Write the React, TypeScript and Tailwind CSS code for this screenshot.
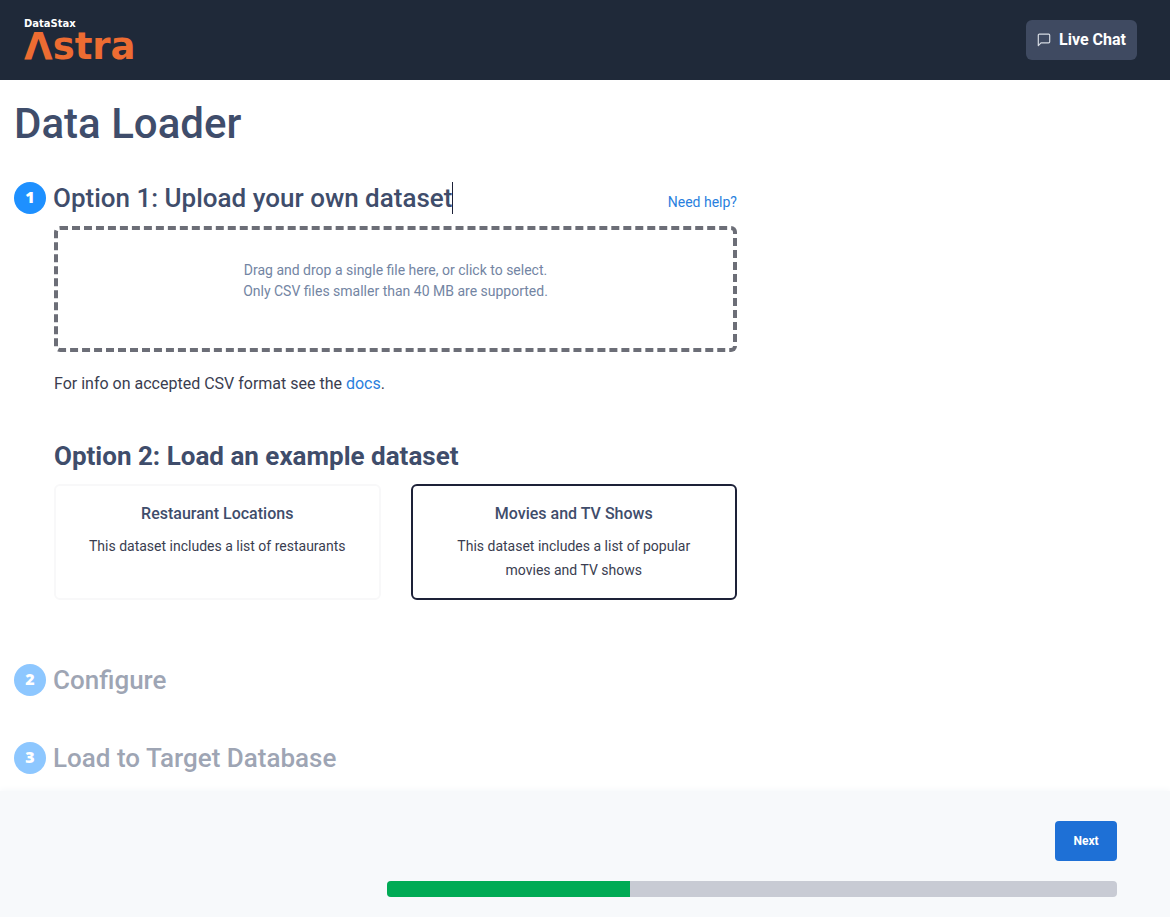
import { useState } from "react";

const datasets = [
    { id: "restaurants", title: "Restaurant Locations", description: "This dataset includes a list of restaurants" },
    { id: "movies", title: "Movies and TV Shows", description: "This dataset includes a list of popular movies and TV shows" },
];

function StepBadge({ step }: { step: number }) {
    return (
        <span className="flex size-8 shrink-0 items-center justify-center rounded-full bg-[#1e90ff] pb-0.5 font-['Open_Sans',sans-serif] text-base font-extrabold text-white">
            {step}
        </span>
    );
}

function PendingStep({ step, title }: { step: number; title: string }) {
    return (
        <section className="flex items-center gap-[7px] opacity-50">
            <StepBadge step={step} />
            <h2 className="text-[26px] leading-8 font-medium text-[#3f4d6b]">{title}</h2>
        </section>
    );
}

export default function App() {
    const [selected, setSelected] = useState("movies");
    const progress = 33.3;

    return (
        <div className="flex min-h-screen flex-col bg-white font-[Roboto,sans-serif] text-[#3a3d50]">
            <header className="flex h-20 items-center justify-between bg-[#1f2939] pr-[33px] pl-6">
                <a href="#" className="flex flex-col pt-0.5 font-['DejaVu_Sans',sans-serif] font-bold" aria-label="DataStax Astra">
                    <span className="text-[10px] leading-3 text-white">DataStax</span>
                    <span className="text-[37px] leading-[34px] text-[#ed6c32]">Λstra</span>
                </a>
                <button type="button" className="flex h-10 items-center gap-2 rounded-md bg-[#3f4a61] px-[11px] font-bold text-white">
                    <svg className="size-3.5" viewBox="0 0 14 14" fill="none" stroke="#d5dae2" strokeWidth="1.2" strokeLinejoin="round" aria-hidden="true">
                        <path d="M2.3 1.2h9.4c.6 0 1 .4 1 1v6.6c0 .6-.4 1-1 1H4l-2.7 2.8V2.2c0-.6.4-1 1-1z" />
                    </svg>
                    Live Chat
                </button>
            </header>

            <main className="w-full grow px-3.5 pt-5 pb-3">
                <div className="max-w-[723px]">
                    <h1 className="text-[42px] leading-12 font-medium text-[#3f4d6b]">Data Loader</h1>

                    {/* Step 1 */}
                    <section className="mt-[34px]">
                        <div className="flex items-center gap-[7px]">
                            <StepBadge step={1} />
                            <h2 className="border-r border-[#1d2138] text-[26px] leading-8 font-medium text-[#3f4d6b]">
                                Option 1: Upload your own dataset
                            </h2>
                            <a href="#" className="ml-auto pt-2 text-sm text-[#2a7fde]">Need help?</a>
                        </div>

                        <div className="pl-10">
                            <label className="relative mt-3 block h-[126px] cursor-pointer rounded-md border-4 border-dashed border-[#6c6e77] pt-[30px] text-center text-sm leading-[21px] text-[#7385a3]">
                                Drag and drop a single file here, or click to select.
                                <br />
                                Only CSV files smaller than 40 MB are supported.
                                <input type="file" accept=".csv" className="sr-only" />
                            </label>
                            <p className="mt-5 leading-6">
                                For info on accepted CSV format see the <a href="#" className="text-[#2a7fde]">docs</a>.
                            </p>

                            <h2 className="mt-11 text-[26px] leading-8 font-bold text-[#3f4d6b]">Option 2: Load an example dataset</h2>
                            <div className="mt-3 grid grid-cols-2 gap-[30px]">
                                {datasets.map((dataset) => (
                                    <button
                                        key={dataset.id}
                                        type="button"
                                        aria-pressed={selected === dataset.id}
                                        onClick={() => setSelected(dataset.id)}
                                        className={`flex h-[116px] flex-col items-center rounded-md border-2 px-8 pt-4 ${
                                            selected === dataset.id ? "border-[#1d2138]" : "border-[#f8f8f9]"
                                        }`}
                                    >
                                        <span className="leading-6 font-medium text-[#3f4d6b]">{dataset.title}</span>
                                        <span className="mt-2 text-sm leading-6">{dataset.description}</span>
                                    </button>
                                ))}
                            </div>
                        </div>
                    </section>

                    {/* Steps 2 and 3 */}
                    <div className="mt-16 flex flex-col gap-[46px]">
                        <PendingStep step={2} title="Configure" />
                        <PendingStep step={3} title="Load to Target Database" />
                    </div>
                </div>
            </main>

            <footer className="flex flex-col gap-5 bg-[#f7f9fb] pt-[30px] pr-[53px] pb-5 shadow-[0_-2px_6px_#f7f9fb]">
                <button type="button" className="h-10 w-[62px] self-end rounded bg-[#1e70d6] text-xs font-bold text-white">
                    Next
                </button>
                <div
                    role="progressbar"
                    aria-label="Data loader progress"
                    aria-valuenow={33}
                    aria-valuemin={0}
                    aria-valuemax={100}
                    className="ml-[33.1vw] h-4 overflow-hidden rounded bg-[#c8cbd4]"
                >
                    <div className="h-full bg-[#00ab55]" style={{ width: `${progress}%` }} />
                </div>
            </footer>
        </div>
    );
}
